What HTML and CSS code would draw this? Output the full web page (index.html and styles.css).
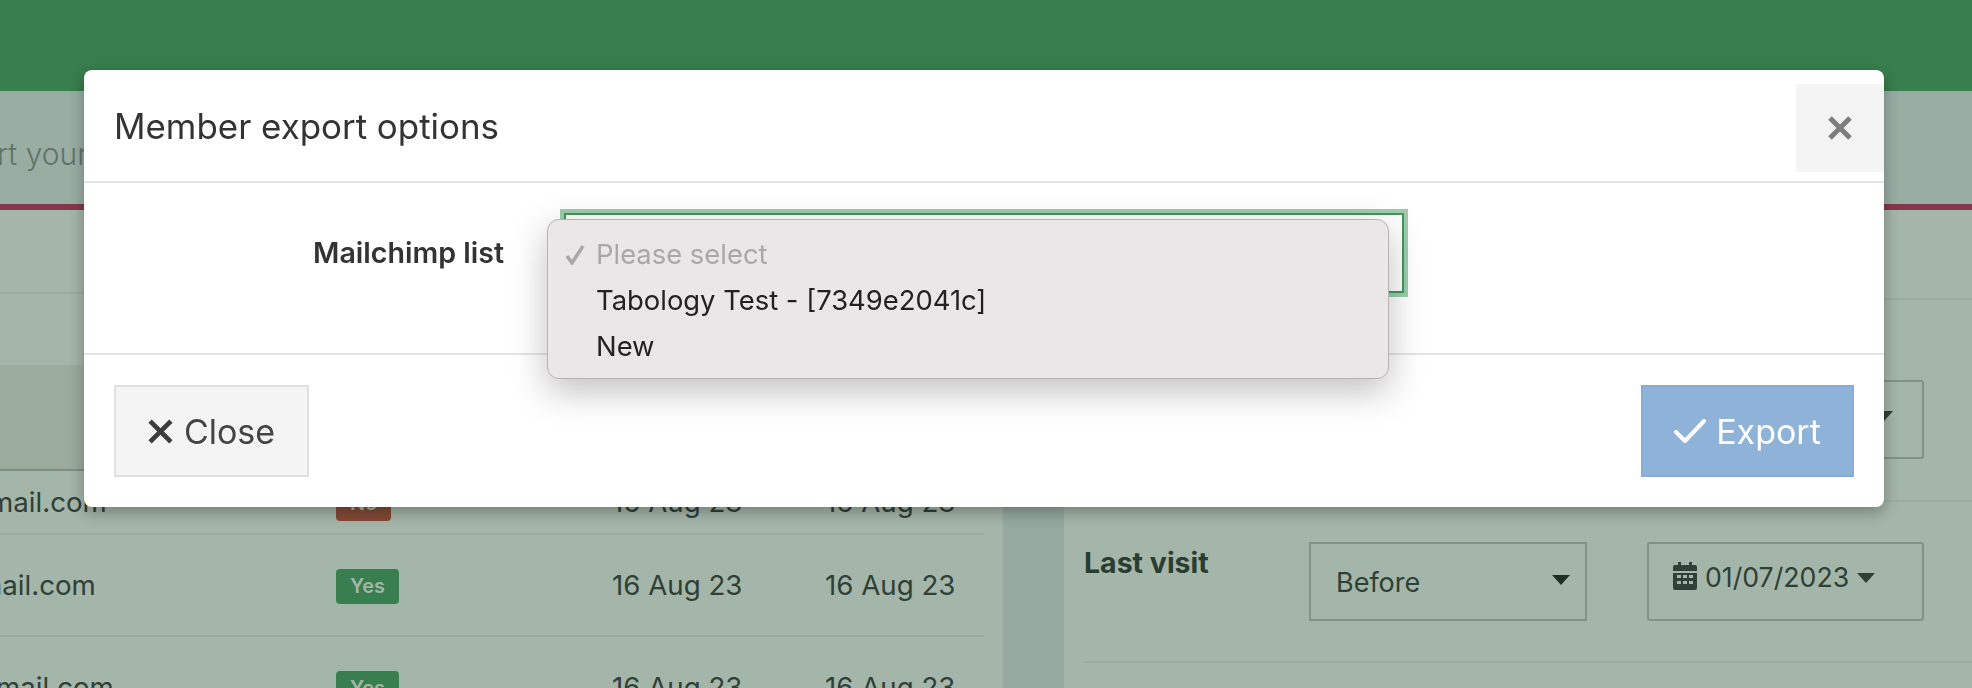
FILE: index.html
```html
<!DOCTYPE html>
<html lang="en">
<head>
    <meta charset="UTF-8">
    <meta name="viewport" content="width=device-width, initial-scale=1.0">
    <title>Member export options</title>
    <link rel="stylesheet" href="styles.css">
</head>
<body>
    <div class="topbar"></div>
    <div class="intro"><span class="intro-text">rt your</span></div>
    <div class="columns">
        <div class="members">
            <div class="members-tools"></div>
            <div class="members-search"></div>
            <div class="members-head"></div>
            <div class="member-row">
                <span class="email email-a">mail.com</span>
                <span><span class="badge badge-no">No</span></span>
                <span>16 Aug 23</span>
                <span>16 Aug 23</span>
            </div>
            <div class="member-row tall">
                <span class="email email-b">mail.com</span>
                <span><span class="badge">Yes</span></span>
                <span>16 Aug 23</span>
                <span>16 Aug 23</span>
            </div>
            <div class="member-row tall">
                <span class="email email-c">mail.com</span>
                <span><span class="badge">Yes</span></span>
                <span>16 Aug 23</span>
                <span>16 Aug 23</span>
            </div>
        </div>
        <div class="filters">
            <div class="filter-row filter-top"></div>
            <div class="filter-row filter-first">
                <div class="filter-label"></div>
                <div class="fake-select"></div>
                <div class="date-box date-box-offset">
                    <svg class="cal-icon" viewBox="0 0 24 28"><path d="M5 0h3v3h8V0h3v3h3a2 2 0 0 1 2 2v4H0V5a2 2 0 0 1 2-2h3zM0 11h24v15a2 2 0 0 1-2 2H2a2 2 0 0 1-2-2z"/></svg>
                    <span class="caret small"></span>
                </div>
            </div>
            <div class="filter-row filter-last">
                <strong class="filter-label">Last visit</strong>
                <div class="fake-select">Before <span class="caret"></span></div>
                <div class="date-box">
                    <svg class="cal-icon" viewBox="0 0 24 28">
                        <path fill-rule="evenodd" d="M5 0h3v3h8V0h3v3h3a2 2 0 0 1 2 2v4H0V5a2 2 0 0 1 2-2h3zM0 11h24v15a2 2 0 0 1-2 2H2a2 2 0 0 1-2-2zM4 13v3h4v-3zM10 13v3h4v-3zM16 13v3h4v-3zM4 19v3h4v-3zM10 19v3h4v-3zM16 19v3h4v-3z"/>
                    </svg>
                    <span>01/07/2023</span>
                    <span class="caret small"></span>
                </div>
            </div>
        </div>
    </div>

    <div class="modal">
        <div class="modal-header">
            <h2 class="modal-title">Member export options</h2>
            <button class="modal-x">
                <svg viewBox="0 0 24 24" width="24" height="24"><path d="M2 2l20 20M22 2L2 22" stroke="#7d7d7d" stroke-width="5" fill="none"/></svg>
            </button>
        </div>
        <div class="modal-body">
            <label class="field-label">Mailchimp list</label>
            <div class="list-select"></div>
            <div class="native-menu">
                <div class="menu-option menu-disabled">
                    <svg class="menu-check" viewBox="0 0 20 20"><path d="M2 11l5 7L18 1" stroke="#a9a8a9" stroke-width="3.5" fill="none"/></svg>
                    Please select
                </div>
                <div class="menu-option">Tabology Test - [7349e2041c]</div>
                <div class="menu-option">New</div>
            </div>
        </div>
        <div class="modal-footer">
            <button class="btn btn-close">
                <svg viewBox="0 0 24 24" width="25" height="25"><path d="M2 2l20 20M22 2L2 22" stroke="#3c3c3c" stroke-width="4.5" fill="none"/></svg>
                Close
            </button>
            <button class="btn btn-export">
                <svg viewBox="0 0 32 24" width="32" height="24"><path d="M2 13l9 9L30 2" stroke="#fff" stroke-width="4" stroke-linecap="round" stroke-linejoin="round" fill="none"/></svg>
                Export
            </button>
        </div>
    </div>
</body>
</html>
```

FILE: styles.css
```css
html, body {
    height: 100%;
}
body {
    margin: 0;
    overflow: hidden;
    background-color: #a4b5a9;
    color: #2f4036;
    font-family: Inter, "Liberation Sans", sans-serif;
    font-size: 27.7px;
}
.topbar {
    height: 91px;
    background-color: #387e4e;
}
.intro {
    box-sizing: border-box;
    height: 113px;
    padding-top: 12px;
    background-color: #99ada3;
    color: #617469;
    display: flex;
    align-items: center;
    white-space: nowrap;
    overflow: hidden;
}
.intro-text {
    margin-left: -3px;
    font-size: 30px;
    font-weight: 300;
}
.columns {
    display: flex;
    border-top: 6px solid #83394b;
}

/* members table */
.members {
    width: 1004px;
    flex-shrink: 0;
    box-sizing: border-box;
    padding-right: 18px;
    border-right: 2px solid #9dafa4;
}
.members-tools {
    height: 82px;
    border-bottom: 2px solid #9aad9f;
    margin-right: -18px;
}
.members-search {
    height: 71px;
    margin-right: -18px;
}
.members-head {
    height: 104px;
    background-color: #9bac9f;
    border-bottom: 2px solid #7d8f83;
}
.member-row {
    display: grid;
    grid-template-columns: 336px 276px 213px 159px;
    align-items: center;
    height: 62px;
    border-bottom: 2px solid #9aad9f;
    white-space: nowrap;
}
.member-row.tall {
    height: 100px;
}
.email-a {
    margin-left: -11px;
}
.email-b {
    margin-left: -22px;
}
.email-c {
    margin-left: -4px;
}
.badge {
    display: inline-block;
    box-sizing: border-box;
    height: 35px;
    line-height: 35px;
    padding: 0 14px;
    border-radius: 4px;
    background-color: #387e4e;
    color: #a4b5a9;
    font-size: 20px;
    font-weight: 600;
}
.badge-no {
    background-color: #824a36;
}

/* filters */
.filters {
    flex: 1;
    margin-left: 60px;
    padding-left: 20px;
    background-color: #a4b5a9;
    box-shadow: -60px 0 0 #95a9a0;
}
.filter-row {
    display: flex;
    align-items: flex-start;
    border-bottom: 2px solid #9aad9f;
}
.filter-top {
    height: 88px;
}
.filter-first {
    padding: 80px 0 41px;
}
.filter-last {
    padding: 40px 0 40px;
}
.filter-label {
    width: 225px;
    font-size: 28.5px;
    font-weight: 700;
    color: #2a3d31;
    margin-top: 3px;
}
.fake-select {
    box-sizing: border-box;
    width: 278px;
    height: 79px;
    padding: 2px 15px 0 25px;
    font-size: 27px;
    display: flex;
    align-items: center;
    justify-content: space-between;
    border: 2px solid #7f9488;
}
.fake-select .caret {
    margin-bottom: 6px;
}
.date-box {
    box-sizing: border-box;
    width: 277px;
    height: 79px;
    margin-left: 60px;
    padding: 15px 24px;
    font-size: 26.7px;
    display: flex;
    align-items: flex-start;
    gap: 8px;
    border: 2px solid #7f9488;
    border-radius: 3px;
    line-height: 36px;
    white-space: nowrap;
}
.date-box-offset {
    padding-left: 194px;
}
.cal-icon {
    width: 24px;
    height: 28px;
    margin-top: 3px;
    fill: #2f4036;
    flex-shrink: 0;
}
.caret {
    width: 0;
    height: 0;
    border-left: 9.5px solid transparent;
    border-right: 9.5px solid transparent;
    border-top: 10px solid #1f2f25;
}
.caret.small {
    margin-top: 14px;
    border-top-color: #2f4036;
}

/* modal */
.modal {
    position: fixed;
    top: 70px;
    left: 84px;
    width: 1800px;
    background: white;
    border-radius: 8px;
    box-shadow: 0 5px 15px rgba(0, 0, 0, 0.3);
    color: #333;
}
.modal-header {
    height: 111px;
    display: flex;
    justify-content: space-between;
    align-items: flex-start;
    border-bottom: 2px solid #e5e5e5;
}
.modal-title {
    margin: 0 0 0 30px;
    line-height: 112px;
    font-size: 34.9px;
    font-weight: 400;
}
.modal-x {
    width: 88px;
    height: 88px;
    margin-top: 14px;
    padding: 0;
    border: none;
    background-color: #f4f4f4;
    display: flex;
    align-items: center;
    justify-content: center;
}
.modal-body {
    position: relative;
    height: 172px;
    box-sizing: border-box;
    padding: 30px 0 0 0;
    display: flex;
    border-bottom: 2px solid #e5e5e5;
}
.field-label {
    width: 420px;
    text-align: right;
    font-size: 28.6px;
    font-weight: 600;
    line-height: 80px;
}
.list-select {
    box-sizing: border-box;
    width: 840px;
    height: 80px;
    margin-left: 60px;
    border: 2px solid #3d9a5c;
    box-shadow: 0 0 0 4px rgba(61, 154, 92, 0.5);
}
.native-menu {
    position: absolute;
    top: 36px;
    left: 463px;
    box-sizing: border-box;
    width: 842px;
    height: 160px;
    padding: 11px 0 0 48px;
    font-size: 27.4px;
    background-color: #e9e7e8;
    border: 1px solid #b5b3b4;
    border-radius: 12px;
    box-shadow: 0 12px 36px rgba(0, 0, 0, 0.25);
    color: #222;
}
.menu-option {
    position: relative;
    height: 46px;
    line-height: 46px;
}
.menu-disabled {
    color: #a9a8a9;
}
.menu-check {
    position: absolute;
    left: -31px;
    top: 14px;
    width: 20px;
    height: 20px;
}
.modal-footer {
    padding: 30px;
    display: flex;
    justify-content: space-between;
}
.btn {
    box-sizing: border-box;
    height: 92px;
    display: flex;
    align-items: center;
    justify-content: center;
    gap: 11px;
    font-family: inherit;
    font-size: 34px;
}
.btn-close {
    width: 195px;
    background-color: #f4f4f4;
    border: 2px solid #e0e0e0;
    color: #444;
}
.btn-export {
    width: 213px;
    gap: 10px;
    background-color: #8fb2d9;
    border: 2px solid #89acd4;
    color: white;
}
```
